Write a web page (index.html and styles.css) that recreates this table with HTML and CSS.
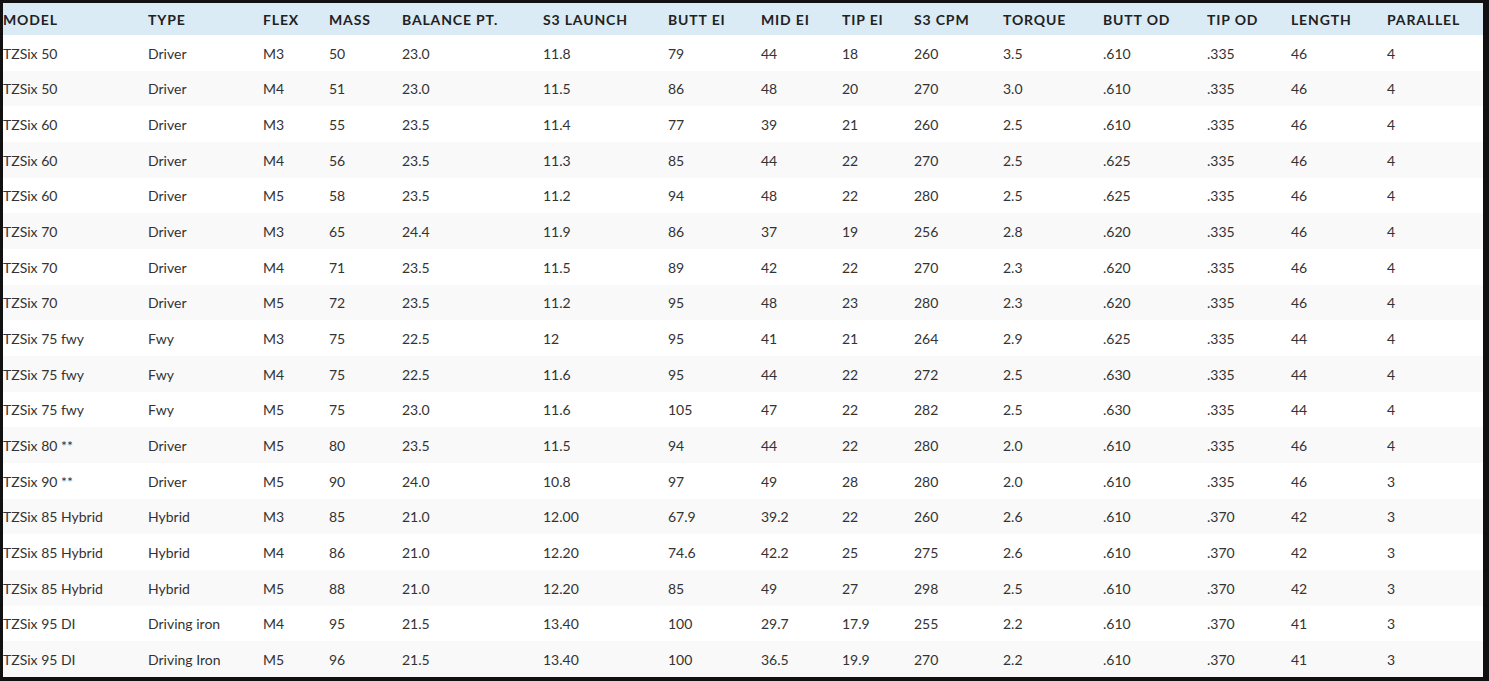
FILE: index.html
```html
<!DOCTYPE html>
<html lang="en">
<head>
<meta charset="utf-8">
<title>TZSix Specs</title>
<link rel="stylesheet" href="styles.css">
</head>
<body>
<div class="frame">
  <div class="spec-table">
    <div class="row head">
      <div>MODEL</div><div>TYPE</div><div>FLEX</div><div>MASS</div><div>BALANCE PT.</div><div>S3 LAUNCH</div><div>BUTT EI</div><div>MID EI</div><div>TIP EI</div><div>S3 CPM</div><div>TORQUE</div><div>BUTT OD</div><div>TIP OD</div><div>LENGTH</div><div>PARALLEL</div>
    </div>
    <div class="row"><div>TZSix 50</div><div>Driver</div><div>M3</div><div>50</div><div>23.0</div><div>11.8</div><div>79</div><div>44</div><div>18</div><div>260</div><div>3.5</div><div>.610</div><div>.335</div><div>46</div><div>4</div></div>
    <div class="row"><div>TZSix 50</div><div>Driver</div><div>M4</div><div>51</div><div>23.0</div><div>11.5</div><div>86</div><div>48</div><div>20</div><div>270</div><div>3.0</div><div>.610</div><div>.335</div><div>46</div><div>4</div></div>
    <div class="row"><div>TZSix 60</div><div>Driver</div><div>M3</div><div>55</div><div>23.5</div><div>11.4</div><div>77</div><div>39</div><div>21</div><div>260</div><div>2.5</div><div>.610</div><div>.335</div><div>46</div><div>4</div></div>
    <div class="row"><div>TZSix 60</div><div>Driver</div><div>M4</div><div>56</div><div>23.5</div><div>11.3</div><div>85</div><div>44</div><div>22</div><div>270</div><div>2.5</div><div>.625</div><div>.335</div><div>46</div><div>4</div></div>
    <div class="row"><div>TZSix 60</div><div>Driver</div><div>M5</div><div>58</div><div>23.5</div><div>11.2</div><div>94</div><div>48</div><div>22</div><div>280</div><div>2.5</div><div>.625</div><div>.335</div><div>46</div><div>4</div></div>
    <div class="row"><div>TZSix 70</div><div>Driver</div><div>M3</div><div>65</div><div>24.4</div><div>11.9</div><div>86</div><div>37</div><div>19</div><div>256</div><div>2.8</div><div>.620</div><div>.335</div><div>46</div><div>4</div></div>
    <div class="row"><div>TZSix 70</div><div>Driver</div><div>M4</div><div>71</div><div>23.5</div><div>11.5</div><div>89</div><div>42</div><div>22</div><div>270</div><div>2.3</div><div>.620</div><div>.335</div><div>46</div><div>4</div></div>
    <div class="row"><div>TZSix 70</div><div>Driver</div><div>M5</div><div>72</div><div>23.5</div><div>11.2</div><div>95</div><div>48</div><div>23</div><div>280</div><div>2.3</div><div>.620</div><div>.335</div><div>46</div><div>4</div></div>
    <div class="row"><div>TZSix 75 fwy</div><div>Fwy</div><div>M3</div><div>75</div><div>22.5</div><div>12</div><div>95</div><div>41</div><div>21</div><div>264</div><div>2.9</div><div>.625</div><div>.335</div><div>44</div><div>4</div></div>
    <div class="row"><div>TZSix 75 fwy</div><div>Fwy</div><div>M4</div><div>75</div><div>22.5</div><div>11.6</div><div>95</div><div>44</div><div>22</div><div>272</div><div>2.5</div><div>.630</div><div>.335</div><div>44</div><div>4</div></div>
    <div class="row"><div>TZSix 75 fwy</div><div>Fwy</div><div>M5</div><div>75</div><div>23.0</div><div>11.6</div><div>105</div><div>47</div><div>22</div><div>282</div><div>2.5</div><div>.630</div><div>.335</div><div>44</div><div>4</div></div>
    <div class="row"><div>TZSix 80 **</div><div>Driver</div><div>M5</div><div>80</div><div>23.5</div><div>11.5</div><div>94</div><div>44</div><div>22</div><div>280</div><div>2.0</div><div>.610</div><div>.335</div><div>46</div><div>4</div></div>
    <div class="row"><div>TZSix 90 **</div><div>Driver</div><div>M5</div><div>90</div><div>24.0</div><div>10.8</div><div>97</div><div>49</div><div>28</div><div>280</div><div>2.0</div><div>.610</div><div>.335</div><div>46</div><div>3</div></div>
    <div class="row"><div>TZSix 85 Hybrid</div><div>Hybrid</div><div>M3</div><div>85</div><div>21.0</div><div>12.00</div><div>67.9</div><div>39.2</div><div>22</div><div>260</div><div>2.6</div><div>.610</div><div>.370</div><div>42</div><div>3</div></div>
    <div class="row"><div>TZSix 85 Hybrid</div><div>Hybrid</div><div>M4</div><div>86</div><div>21.0</div><div>12.20</div><div>74.6</div><div>42.2</div><div>25</div><div>275</div><div>2.6</div><div>.610</div><div>.370</div><div>42</div><div>3</div></div>
    <div class="row"><div>TZSix 85 Hybrid</div><div>Hybrid</div><div>M5</div><div>88</div><div>21.0</div><div>12.20</div><div>85</div><div>49</div><div>27</div><div>298</div><div>2.5</div><div>.610</div><div>.370</div><div>42</div><div>3</div></div>
    <div class="row"><div>TZSix 95 DI</div><div>Driving iron</div><div>M4</div><div>95</div><div>21.5</div><div>13.40</div><div>100</div><div>29.7</div><div>17.9</div><div>255</div><div>2.2</div><div>.610</div><div>.370</div><div>41</div><div>3</div></div>
    <div class="row"><div>TZSix 95 DI</div><div>Driving Iron</div><div>M5</div><div>96</div><div>21.5</div><div>13.40</div><div>100</div><div>36.5</div><div>19.9</div><div>270</div><div>2.2</div><div>.610</div><div>.370</div><div>41</div><div>3</div></div>
  </div>
</div>
</body>
</html>
```

FILE: styles.css
```css
html, body {
  margin: 0;
  padding: 0;
  background: #111111;
}

.frame {
  padding: 3px 6px 4px 3px;
  width: 1480px;
}

.spec-table {
  display: flex;
  flex-direction: column;
  font-family: Lato, "Open Sans", sans-serif;
  font-size: 14px;
  color: #333333;
}

.row {
  box-sizing: border-box;
  display: grid;
  grid-template-columns: 145px 115px 66px 73px 141px 125px 93px 81px 72px 89px 100px 104px 84px 96px 96px;
  align-items: center;
  height: 35.67px;
  padding-top: 1px;
  background: #ffffff;
}

.row:nth-child(odd) {
  background: #f9f9f9;
}

.row > div {
  white-space: nowrap;
}

.row.head {
  height: 32px;
  padding-top: 0;
  background: #daebf6;
  font-weight: 700;
  letter-spacing: 0.85px;
  color: #222222;
}
```
